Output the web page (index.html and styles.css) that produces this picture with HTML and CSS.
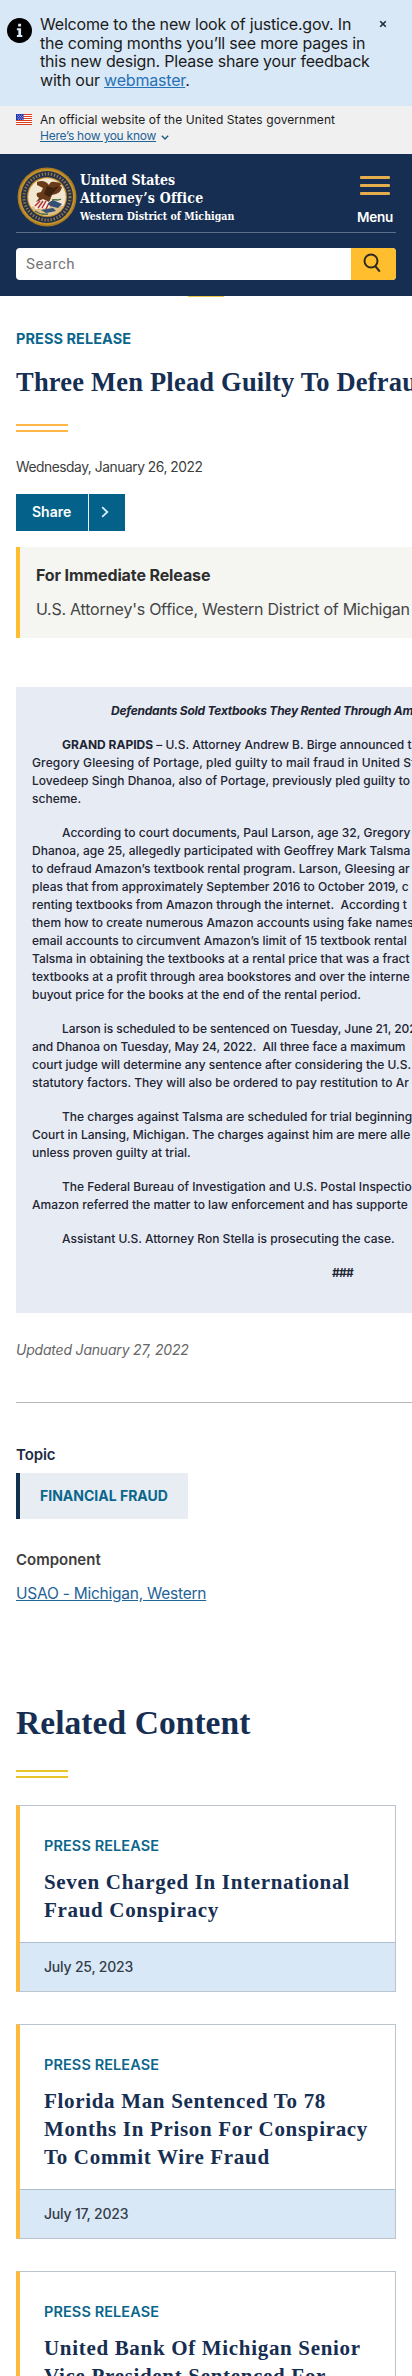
FILE: index.html
```html
<!DOCTYPE html>
<html lang="en">
<head>
<meta charset="utf-8">
<title>Western District of Michigan | Three Men Plead Guilty</title>
<link rel="stylesheet" href="styles.css">
</head>
<body>
<section class="alert">
  <svg class="alert-icon" viewBox="0 0 24 24"><circle cx="12" cy="12" r="12"/><path fill="#d9e8f6" d="M10.700 5.500h2.800v2.600h-2.800zM9.500 9.800h4v6.400h1.200v2H9.500v-2h1.400v-4.400H9.500z"/></svg>
  <p class="alert-text">Welcome to the new look of justice.gov. In<br>the coming months you’ll see more pages in<br>this new design. Please share your feedback<br>with our <a href="#">webmaster</a>.</p>
  <svg class="alert-close" viewBox="0 0 8 8"><path d="M1.200 1.200l5.600 5.600M6.800 1.200L1.200 6.800"/></svg>
</section>
<section class="banner">
  <svg class="flag" viewBox="0 0 16 11"><path fill="#fff" d="M0 0h16v11H0z"/><path stroke="#db3e1f" d="M0 .5h16M0 2.500h16M0 4.500h16M0 6.500h16M0 8.500h16M0 10.500h16"/><path fill="#1e33b1" d="M0 0h7.500v6H0z"/><path stroke="#fff" stroke-width=".7" stroke-dasharray=".8 1.200" d="M1 1.200h6M2 2.600h5M1 4h6M2 5.200h5"/></svg>
  <div>
    <p class="banner-text">An official website of the United States government</p>
    <p class="banner-link"><a href="#">Here’s how you know</a><svg viewBox="0 0 8 5"><path d="M.8.8L4 4 7.200.8"/></svg></p>
  </div>
</section>
<header class="header">
  <div class="header-top">
    <svg class="seal" viewBox="0 0 60 60">
      <defs><clipPath id="shield"><circle cx="30" cy="30" r="19"/></clipPath></defs>
      <circle cx="30" cy="30" r="29.500" fill="#a87a20"/>
      <circle cx="30" cy="30" r="28" fill="#c4922c"/>
      <circle cx="30" cy="30" r="26" fill="#26304d"/>
      <circle cx="30" cy="30" r="23" fill="none" stroke="#8f7c4b" stroke-width="3" stroke-dasharray="1.300 1.800"/>
      <circle cx="30" cy="30" r="20" fill="#c98e27"/>
      <circle cx="30" cy="30" r="18.800" fill="#f3e6d0"/>
      <g clip-path="url(#shield)">
        <path fill="#dcbd86" d="M14 40c8-2 23-2 33-1-3 8-9 11-17 11s-13-4-16-10z"/>
        <path fill="#6a3b19" d="M20 15c5-2 9-1 12 3 1-3 3-4 6-3l7 1-2 3 2 1c-1 4-3 6-6 7l-4 1-2 5-2 4-7-3-5 1 3-4c-2-1-3-3-2-5l4-1 2-4-6-3z"/>
        <path fill="#3f2311" d="M30 19l6 2 6-2-5 6-5 5-5-3z"/>
        <path fill="#f3eee5" d="M17 36l9-4 8 4-2 5-14 1z"/>
        <path stroke="#b9312d" stroke-width="1.500" d="M18 39l5-5M21 41l5-7M25 41l4-7M29 42l3-6"/>
        <path fill="#344f78" d="M31 36l5-3 9 4-4 4-8-2zM24 43l12-2 3 3-10 2z"/>
        <path fill="none" stroke="#4c7142" stroke-width="1.500" d="M35 33c3-1 6 1 9-1M18 44c4 3 8 4 13 3"/>
      </g>
    </svg>
    <div class="office"><span class="office-a">United States</span><span class="office-b">Attorney’s Office</span><span class="office-c">Western District of Michigan</span></div>
    <button class="menu"><i></i><i></i><i></i><span>Menu</span></button>
  </div>
  <div class="search"><span class="search-input">Search</span><span class="search-button"><svg viewBox="0 0 18 20"><circle cx="8" cy="8" r="6.500"/><path d="M12.200 13l4.600 5.700"/></svg></span></div>
</header>
<div class="tab"></div>
<main class="main">
  <p class="eyebrow">PRESS RELEASE</p>
  <h1 class="title">Three Men Plead Guilty To Defrau</h1>
  <div class="rule"></div>
  <p class="date">Wednesday, January 26, 2022</p>
  <div class="share"><span class="share-label">Share</span><span class="share-arrow"><svg viewBox="0 0 8 12"><path d="M1.200 1.200L6.300 6l-5.100 4.800"/></svg></span></div>
  <div class="immediate"><p class="immediate-head">For Immediate Release</p><p class="immediate-text">U.S. Attorney's Office, Western District of Michigan</p></div>
  <article class="article">
    <p class="article-head">Defendants Sold Textbooks They Rented Through Am</p>
    <p class="indent"><b>GRAND RAPIDS</b> – U.S. Attorney Andrew B. Birge announced t<br><span class="loose">Gregory Gleesing of Portage, pled guilty to mail fraud in United St</span><br>Lovedeep Singh Dhanoa, also of Portage, previously pled guilty to<br>scheme.</p>
    <p class="indent">According to court documents, Paul Larson, age 32, Gregory<br>Dhanoa, age 25, allegedly participated with Geoffrey Mark Talsma<br>to defraud Amazon’s textbook rental program. Larson, Gleesing ar<br>pleas that from approximately September 2016 to October 2019, c<br>renting textbooks from Amazon through the internet.&nbsp; According t<br>them how to create numerous Amazon accounts using fake names<br>email accounts to circumvent Amazon’s limit of 15 textbook rental<br>Talsma in obtaining the textbooks at a rental price that was a fract<br>textbooks at a profit through area bookstores and over the interne<br>buyout price for the books at the end of the rental period.</p>
    <p class="indent"><span class="tight">Larson is scheduled to be sentenced on Tuesday, June 21, 202</span><br><span class="tight">and Dhanoa on Tuesday, May 24, 2022.&nbsp; All three face a maximum</span><br>court judge will determine any sentence after considering the U.S.<br>statutory factors. They will also be ordered to pay restitution to Ar</p>
    <p class="indent">The charges against Talsma are scheduled for trial beginning<br>Court in Lansing, Michigan. The charges against him are mere alle<br>unless proven guilty at trial.</p>
    <p class="indent">The Federal Bureau of Investigation and U.S. Postal Inspectio<br>Amazon referred the matter to law enforcement and has supporte</p>
    <p class="indent">Assistant U.S. Attorney Ron Stella is prosecuting the case.</p>
    <p class="end">###</p>
  </article>
  <p class="updated">Updated January 27, 2022</p>
  <hr class="divider">
  <h2 class="topic">Topic</h2>
  <a class="tag" href="#">FINANCIAL FRAUD</a>
  <h2 class="component">Component</h2>
  <p class="component-link"><a href="#">USAO - Michigan, Western</a></p>
  <h2 class="related">Related Content</h2>
  <div class="rule rule-related"></div>
  <div class="cards">
    <div class="card"><div class="card-body"><p class="card-kind">PRESS RELEASE</p><h3 class="card-title">Seven Charged In International<br>Fraud Conspiracy</h3></div><p class="card-date">July 25, 2023</p></div>
    <div class="card"><div class="card-body"><p class="card-kind">PRESS RELEASE</p><h3 class="card-title">Florida Man Sentenced To 78<br>Months In Prison For Conspiracy<br>To Commit Wire Fraud</h3></div><p class="card-date">July 17, 2023</p></div>
    <div class="card"><div class="card-body"><p class="card-kind">PRESS RELEASE</p><h3 class="card-title">United Bank Of Michigan Senior<br>Vice President Sentenced For</h3></div></div>
  </div>
</main>
</body>
</html>
```
FILE: styles.css
```css
* { box-sizing: border-box; }
html, body { margin: 0; }
body { width: 412px; height: 2376px; overflow: hidden; background: #fff; color: #1b1b1b; font-family: Inter, "Liberation Sans", sans-serif; white-space: nowrap; }
p, h1, h2, h3 { margin: 0; }
svg { display: block; flex: none; }
a { color: #1f6397; }

.alert { display: flex; height: 106px; padding: 15px 0 0 7px; background: #d9e8f6; }
.alert-icon { width: 25px; height: 25px; margin: 3px 8px 0 0; }
.alert-text { width: 339px; font-size: 16px; line-height: 18.500px; letter-spacing: -.187px; }
.alert-text a { color: #2672b9; }
.alert-close { width: 8px; height: 8px; margin-top: 5px; fill: none; stroke: #1b2b3b; stroke-width: 1.600; }
.banner { display: flex; height: 48px; padding: 6px 0 0 16px; background: #f0f0f0; }
.flag { width: 16px; height: 11px; margin: 2px 8px 0 0; }
.banner-text, .banner-link { font-size: 12px; line-height: 16px; letter-spacing: .073px; }
.banner-link { display: flex; align-items: center; letter-spacing: -.249px; }
.banner-link svg { width: 8px; height: 5px; margin: 2px 0 0 5px; fill: none; stroke: #1f5c78; stroke-width: 1.400; }

.header { height: 142px; padding: 0 16px; background: #162e51; color: #fff; }
.header-top { display: flex; height: 79px; padding-top: 12px; border-bottom: 1px solid #5c6f8b; }
.seal { width: 60px; height: 60px; margin: 1px 3px 0 1px; }
.office { display: flex; flex-direction: column; padding-top: 5px; font-family: "DejaVu Serif Condensed", "DejaVu Serif", serif; font-weight: 700; }
.office-a, .office-b { height: 18px; font-size: 14px; line-height: 18px; }
.office-a { letter-spacing: -.08px; }
.office-b { letter-spacing: .24px; }
.office-c { font-size: 10.500px; line-height: 18px; letter-spacing: .03px; }
.menu { display: flex; flex-direction: column; align-items: center; width: 46px; margin: 10px -2px 0 auto; padding: 0; border: 0; background: none; color: #fff; font: 600 13.500px/20px Inter, sans-serif; letter-spacing: -.25px; }
.menu i { width: 30px; height: 3px; margin-bottom: 5px; background: #e5ad4c; border-radius: 1px; }
.menu span { margin-top: 7px; }
.search { display: flex; height: 32px; margin-top: 15px; border-radius: 4px; overflow: hidden; background: #fff; }
.search-input { width: 335px; padding-left: 10px; color: #757575; font: 15px/33px Roboto, sans-serif; letter-spacing: .48px; }
.search-button { display: flex; width: 45px; padding: 5px 0 0 12px; background: #ffbe2e; }
.search-button svg { width: 18px; height: 20px; fill: none; stroke: #2d2b22; stroke-width: 2; }
.tab { width: 36px; height: 1px; margin-left: 188px; background: #e9c846; }

.main { padding: 31px 0 0 16px; }
.eyebrow { color: #0b668b; font-size: 14.500px; font-weight: 700; line-height: 22px; letter-spacing: .05px; }
.title { margin-top: 12px; overflow: hidden; color: #162e51; font: 700 26.500px/40px "Liberation Serif", serif; letter-spacing: .2px; }
.rule { width: 52px; height: 8px; margin-top: 22px; border: solid #ffb845; border-width: 2px 0; }
.date { margin-top: 24px; font-size: 13.800px; line-height: 22px; letter-spacing: -.46px; color: #3d3d3d; }
.share { display: flex; width: 109px; height: 37px; margin-top: 16px; background: #04628a; color: #fff; }
.share-label { width: 73px; padding-left: 16px; border-right: 1px solid #e5f2f7; font-size: 14px; font-weight: 600; line-height: 36px; }
.share-arrow { padding: 12px 0 0 12px; }
.share-arrow svg { width: 8px; height: 12px; fill: none; stroke: #d6f1ff; stroke-width: 1.800; }
.immediate { height: 91px; margin-top: 16px; padding: 16px 0 16px 16px; border-left: 4px solid #ffbe2e; background: #f5f6f2; color: #2e2e2e; }
.immediate-head { font-size: 16px; font-weight: 700; line-height: 24px; letter-spacing: -.108px; }
.immediate-text { margin-top: 10px; color: #454545; font-size: 16px; line-height: 24px; letter-spacing: -.246px; }

.article { height: 626px; margin-top: 49px; padding: 15px 0 15px 16px; overflow: hidden; background: #e7ebf3; color: #1d2433; font-size: 12px; font-weight: 500; line-height: 18px; letter-spacing: .01px; }
.article p { margin-bottom: 16px; }
.article .article-head { padding-left: 79px; font-weight: 700; font-style: italic; letter-spacing: -.24px; }
.indent { text-indent: 30px; }
.loose { letter-spacing: .13px; }
.tight { letter-spacing: -.08px; }
.article b { font-weight: 700; }
.article .end { padding-left: 300px; font-weight: 700; letter-spacing: -.8px; }
.updated { margin-top: 26px; color: #666; font-size: 14px; font-style: italic; line-height: 22px; letter-spacing: -.2px; }
.divider { height: 1px; margin: 41px 0 0; border: 0; background: #b5b7b9; }
.topic, .component { font-size: 15px; font-weight: 600; line-height: 24px; }
.topic { margin-top: 40px; color: #1b2b45; letter-spacing: -.1px; }
.tag { display: block; width: 172px; height: 46px; margin-top: 6px; padding-left: 20px; border-left: 4px solid #112f4e; background: #e7edf3; color: #0b668b; font-size: 14px; font-weight: 700; line-height: 46px; text-decoration: none; }
.component { margin-top: 29px; color: #3d3d3d; }
.component-link { margin-top: 10px; font-size: 15.500px; line-height: 24px; letter-spacing: -.24px; }
.related { margin-top: 93px; color: #162e51; font: 700 33.500px/48px "Liberation Serif", serif; letter-spacing: .06px; }
.rule-related { margin-top: 23px; border-color: #eac326; }
.cards { display: flex; flex-direction: column; gap: 32px; margin-top: 27px; }
.card { width: 380px; border: 1px solid #bcc5cd; border-left: 4px solid #ffb93b; }
.card-body { padding: 29px 24px 18px; }
.card-kind { color: #0b668b; font-size: 14.500px; font-weight: 600; line-height: 22px; letter-spacing: .09px; }
.card-title { margin-top: 11px; color: #162e51; font: 700 21px/28px "Liberation Serif", serif; letter-spacing: .68px; }
.card-date { height: 49px; padding-left: 24px; border-top: 1px solid #aebecf; background: #d9e8f6; color: #343d49; font-size: 14px; font-weight: 500; line-height: 48px; letter-spacing: -.2px; }
```
